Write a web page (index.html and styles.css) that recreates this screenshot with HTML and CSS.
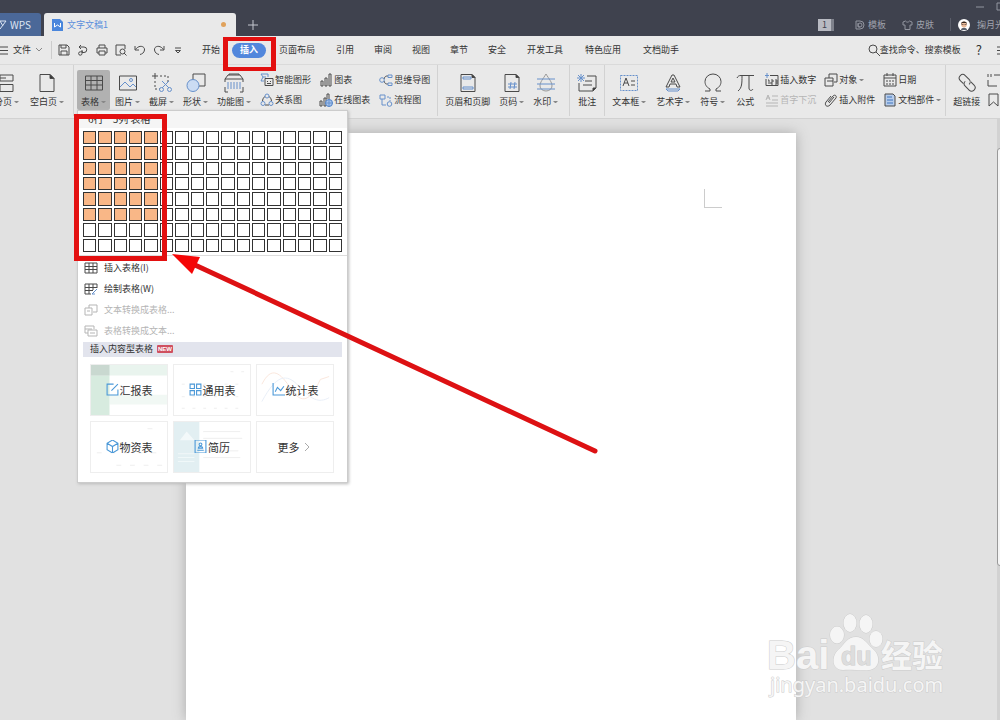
FILE: index.html
```html
<!DOCTYPE html>
<html lang="zh-CN">
<head>
<meta charset="utf-8">
<title>文字文稿1 - WPS</title>
<link rel="stylesheet" href="styles.css">
</head>
<body>
<div class="app">
  <header class="titlebar">
    <button class="wps"><svg width="8" height="12" viewBox="0 0 8 12"><path d="M-3 3 0 10 6 2H0L3 7"/></svg>WPS</button>
    <div class="doctab">
      <svg width="11" height="13" viewBox="0 0 11 13"><path d="M0 1h8l3 3v9H0z" fill="#4a86dc"/><path d="M2.500 5v4l3-2 3 2V5" fill="none" stroke="#fff"/></svg>
      <span>文字文稿1</span><i class="unsaved"></i>
    </div>
    <button class="newtab" aria-label="新建"><svg width="10" height="10" viewBox="0 0 10 10"><path d="M5 0v10M0 5h10"/></svg></button>
    <div class="account">
      <span class="badge">1</span>
      <button class="tool"><svg width="10" height="10" viewBox="0 0 10 10"><path d="M1 1h4a4 4 0 0 1 4 4 4 4 0 0 1-4 4H1z"/><circle cx="5" cy="5" r="2"/><path d="M3 3v4h2"/></svg>模板</button>
      <button class="tool"><svg width="11" height="10" viewBox="0 0 11 10"><path d="M3.500 1 1 2v3h2v4.500h5V5h2V2L7.500 1C6.500 2.500 4.500 2.500 3.500 1z"/></svg>皮肤</button>
      <span class="tsep"></span>
      <svg class="avatar" width="12" height="12" viewBox="0 0 12 12"><circle cx="6" cy="6" r="6" fill="#fff"/><ellipse cx="6" cy="5.500" rx="2.800" ry="3" fill="#e8b896"/><path d="M3 5C2.500 1.500 9.500 1.500 9 5L8 4H4z" fill="#32251f"/><path d="M3.500 5.500h2M6.500 5.500h2" stroke="#544" stroke-width=".7"/><path d="M3 11c0-3 6-3 6 0z" fill="#59606c"/></svg>
      <span class="name">掬月光</span>
    </div>
    <div class="window-controls"><svg width="24" height="10" viewBox="0 0 24 10"><path d="M0 5h8M21 1h8v7h-8z"/></svg></div>
  </header>

  <nav class="menubar">
    <button class="file"><svg width="9" height="9" viewBox="0 0 9 9"><path d="M0 1h8M0 4.500h8M0 8h8"/></svg>文件<svg width="8" height="6" viewBox="0 0 8 6"><path d="M1 1l3 3 3-3" stroke="#888"/></svg></button>
    <div class="quick">
      <button aria-label="保存"><svg viewBox="0 0 12 12"><path d="M1 1h8l2 2v8H1zM3 1v3h5V1M3 11V7h6v4"/></svg></button>
      <button aria-label="输出"><svg viewBox="0 0 12 12"><path d="M4 1 2 3l2 2M2 3h5a2.500 2.500 0 0 1 0 5.500H5M5 6v3.500a1.700 1.700 0 1 1-1.700-1.700H6"/></svg></button>
      <button aria-label="打印"><svg viewBox="0 0 12 12"><path d="M3 4V1h6v3M3 9H1V4h10v5H9M3 7h6v4H3z"/></svg></button>
      <button aria-label="打印预览"><svg viewBox="0 0 12 12"><path d="M10 5V1H1v10h5M11.500 11.500 9 9"/><circle cx="7.500" cy="7.500" r="2.500"/></svg></button>
      <button aria-label="撤销"><svg viewBox="0 0 12 12"><path d="M1 2v4h4M1.500 5.500C5 .5 11 2 10.500 6 10 9 8 10 6 10.500"/></svg></button>
      <button aria-label="恢复"><svg viewBox="0 0 12 12"><path d="M11 2v4H7M10.500 5.500C7 .5 1 2 1.500 6 2 9 4 10 6 10.500"/></svg></button>
      <button aria-label="更多命令"><svg viewBox="0 0 12 12"><path d="M3 4h6M3.500 6.500 6 9l2.500-2.500z"/></svg></button>
    </div>
    <div class="tabs">
      <button>开始</button><button class="active">插入</button><button class="wide">页面布局</button><button>引用</button><button>审阅</button><button>视图</button><button>章节</button><button>安全</button><button class="wide">开发工具</button><button class="wide">特色应用</button><button class="wide">文档助手</button>
    </div>
    <div class="find">
      <button><svg width="12" height="12" viewBox="0 0 12 12"><circle cx="5" cy="5" r="4"/><path d="M8 8l4 4"/></svg>查找命令、搜索模板</button>
      <button class="help">?</button>
      <svg width="9" height="9" viewBox="0 0 9 9"><path d="M0 1h8M0 4.500h8M0 8h8"/></svg>
    </div>
  </nav>

  <section class="ribbon">
    <div class="group first">
      <button class="big"><svg viewBox="0 0 20 20"><path d="M3 8V2h13v6zM3 5h6M3 18.500v-7h13v7z"/></svg><span class="drop">分页</span></button>
      <button class="big"><svg viewBox="0 0 20 20"><path d="M3 1.500h10l4 4v13H3z"/><path d="M13 1.500v4h4z" fill="#333"/></svg><span class="drop">空白页</span></button>
    </div>
    <div class="group tables">
      <button class="big pressed"><svg viewBox="0 0 20 20"><path d="M1.500 3h17v14h-17zM1.500 7.500h17M1.500 12h17M7 3v14M13 3v14"/></svg><span class="drop">表格</span></button>
      <button class="big"><svg viewBox="0 0 20 20"><path d="M1.500 3h17v14h-17z"/><path class="b" d="M2 14l5-5 5 5 3-3 3 3"/><circle class="b" cx="13" cy="7" r="1.500"/></svg><span class="drop">图片</span></button>
      <button class="big"><svg viewBox="0 0 20 20"><path d="M3 0v6M0 3h6"/><path d="M8 3h8v6M3 8v8h5" stroke-dasharray="2 2"/><path class="b" d="M10 8l7 7M17 8l-7 7"/><circle class="b" cx="9.500" cy="16.500" r="2"/><circle class="b" cx="17.500" cy="16.500" r="2"/></svg><span class="drop">截屏</span></button>
      <button class="big"><svg viewBox="0 0 20 20"><path d="M7 8V1h12v12h-6"/><circle cx="7" cy="12.500" r="6" fill="#cbdcf3" stroke="#6690cb"/></svg><span class="drop">形状</span></button>
      <button class="big"><svg viewBox="0 0 20 20"><path d="M1 9V6l3-4h12l3 4v3M1 6h18M1 14v5h3M19 14v5h-3M5 2V1h10v1"/><path class="b" d="M4 9v7M7 9v7M10 9v7M13 9v7M16 9v7"/></svg><span class="drop">功能图</span></button>
      <div class="stack s1">
        <button><svg viewBox="0 0 14 14"><path class="b" d="M8 4V1H1l2 3-2 4h3M3 4h3"/><path d="M5 5.500h8v7H5zM7 8.500h1M10 8.500h1M7 10.500h4"/></svg>智能图形</button>
        <button><svg viewBox="0 0 14 14"><path d="M2.500 8a5 5 0 0 1 2.500-4.500M11.500 8A5 5 0 0 0 9 3.500M5 12h4"/><circle class="b" cx="7" cy="3" r="2"/><circle class="b" cx="3" cy="10.500" r="2"/><circle class="b" cx="11" cy="10.500" r="2"/></svg>关系图</button>
      </div>
      <div class="stack s2">
        <button><svg viewBox="0 0 14 14"><path d="M2 8h2v5H2zM6 5h2v8H6zM10 1h2v12h-2z"/></svg>图表</button>
        <button><svg viewBox="0 0 14 14"><path d="M1 8h2v5H1zM5 5h2v8H5zM8 6V1h2v5"/><circle cx="10" cy="10" r="3.500" fill="#a9c6ee" stroke="#4c7fc6"/><path class="b" d="M6.500 10h7M10 6.500v7"/></svg>在线图表</button>
      </div>
      <div class="stack">
        <button><svg viewBox="0 0 14 14"><path d="M5 6c1-3 2-3 4-3M5 8c1 3 2 3 4 3"/><circle class="b" cx="3" cy="7" r="2.300"/><path class="b" d="M9 2h4v2.500H9zM9 10h4v2.500H9z"/></svg>思维导图</button>
        <button><svg viewBox="0 0 14 14"><path class="b" d="M1 2h5v4H1zM3 6v6h4"/><path class="b" d="M8 4h3v4" stroke-dasharray="2 1"/><circle class="b" cx="10.500" cy="11" r="2.300"/></svg>流程图</button>
      </div>
    </div>
    <div class="group pages">
      <button class="big"><svg viewBox="0 0 20 20"><path d="M3 1.500h11l3 3v14H3z"/><path d="M14 1.500v3h3z" fill="#333"/><path class="b" d="M5 4h8v2H5zM5 14h10v2H5z"/></svg><span>页眉和页脚</span></button>
      <button class="big"><svg viewBox="0 0 20 20"><path d="M3 1.500h11l3 3v14H3z"/><path d="M14 1.500v3h3z" fill="#333"/><path class="b" d="M9 9l-1 7M13 9l-1 7M6 11h9M6 14h9"/></svg><span class="drop">页码</span></button>
      <button class="big"><svg viewBox="0 0 20 20"><path d="M10 1C7 6 4 9 4 13a6 5 0 0 0 12 0C16 9 13 6 10 1z" stroke="#999"/><path class="b" d="M1 6h18M1 11h18M1 16h18"/></svg><span class="drop">水印</span></button>
    </div>
    <div class="group notes">
      <button class="big"><svg viewBox="0 0 20 20"><path d="M10 3h9v12l-3 3H2V10M8 8h7M6 12h9"/><path d="M19 15h-3v3z" fill="#333"/><path class="b" d="M4 1v8M0 5h8M1 2l6 6M7 2 1 8"/></svg><span>批注</span></button>
    </div>
    <div class="group texts">
      <button class="big"><svg viewBox="0 0 20 20"><path class="b" d="M1.500 2.500h17v15h-17z" stroke-dasharray="2 1"/><path d="M4 13l3-8 3 8M5 10h4M12 8h4M12 12h4"/></svg><span class="drop">文本框</span></button>
      <button class="big"><svg viewBox="0 0 20 20"><path d="M9 2h2l6 12h-3l-1-3H7l-1 3H3zM8 9h4l-2-4z"/><path class="b" d="M3 16h14l-2 2H5z"/></svg><span class="drop">艺术字</span></button>
      <button class="big"><svg viewBox="0 0 20 20"><path d="M2 18h5v-2C3 14 2 11 2 8.500a8 7.500 0 0 1 16 0c0 2.500-1 5.500-5 7.500v2h5"/></svg><span class="drop">符号</span></button>
      <button class="big"><svg viewBox="0 0 20 20"><path d="M2 5c1-2 2-2.500 4-2.500h13M7 3c0 7 0 12-4 15M14 3v12c0 3 3 3 4 1"/></svg><span>公式</span></button>
      <div class="stack s3">
        <button><svg viewBox="0 0 14 14"><path d="M5 2.500h8v10H1V6M3 7h1v4M6 7h2v2H6v2h2M10 7h2v4h-2M10 9h2"/><path class="b" d="M2 0v5M0 2.500h4"/></svg>插入数字</button>
        <button disabled><svg viewBox="0 0 14 14"><path d="M1 7l2-5 2 5M2 5h3M7 3h6M7 7h6M1 10h12M1 13h12"/></svg>首字下沉</button>
      </div>
      <div class="stack s4">
        <button><svg viewBox="0 0 14 14"><path d="M5 5V1h8v8h-3M1 5h8v8H1zM3 8h6"/></svg><span class="drop">对象</span></button>
        <button><svg viewBox="0 0 14 14"><path d="M4 9l5-6c2-2 4 0 3 2l-6 7c-3 3-6 0-4-3l5-6M5 10l5-6"/></svg>插入附件</button>
      </div>
      <div class="stack">
        <button><svg viewBox="0 0 14 14"><path d="M1 2h12v11H1zM1 5h12M4 0v3M10 0v3M3 8h2M6 8h2M9 8h2M3 11h2M6 11h2M9 11h2"/></svg>日期</button>
        <button><svg viewBox="0 0 14 14"><path d="M2 1h8l2 2v10H2z" fill="#b7cdec"/><path d="M4 4h5M4 7h6M4 10h6" stroke="#3f74bd"/></svg><span class="drop">文档部件</span></button>
      </div>
    </div>
    <div class="group links">
      <button class="big"><svg viewBox="0 0 20 20"><g transform="rotate(45 10 10)"><path d="M8 13H3.500a3.500 3.500 0 0 1 0-7H9a3.500 3.500 0 0 1 3.500 3.500"/><path d="M12 6.500h4.500a3.500 3.500 0 0 1 0 7H11A3.500 3.500 0 0 1 7.500 10"/></g></svg><span>超链接</span></button>
      <div class="stack s5">
        <button><svg viewBox="0 0 14 14"><path d="M1 1v3M4 1v3M7 2h6M1 7v6h9"/></svg>交叉引用</button>
        <button><svg viewBox="0 0 14 14"><path d="M2 1h9v12L6.500 9 2 13z"/></svg>书签</button>
      </div>
    </div>
  </section>

  <main class="workspace">
    <div class="page"><i class="corner"></i></div>
    <div class="scroll"><i></i></div>
  </main>

  <div class="dropdown">
    <div class="size">6行 * 5列 表格</div>
    <div class="cells" id="cells"></div>
    <div class="items">
      <button><svg viewBox="0 0 14 12"><path d="M1 1h12v10H1zM1 4.500h12M1 7.500h12M5 1v10M9 1v10"/></svg>插入表格(I)</button>
      <button><svg viewBox="0 0 14 12"><path d="M13 5V1H1v10h6M1 4.500h12M1 7.500h8M5 1v10M9 1v6"/><path class="b" d="M8 11l5-5M8 11h3"/></svg>绘制表格(W)</button>
      <button disabled><svg viewBox="0 0 14 12"><path d="M5 4V1h8v7H9M1 4h7v7H1zM3 7h3"/></svg>文本转换成表格...</button>
      <button disabled><svg viewBox="0 0 14 12"><path d="M4 8H1V1h9v3M1 4h7M4 5h9v6H4zM6 8h5"/></svg>表格转换成文本...</button>
    </div>
    <div class="section">插入内容型表格<b>NEW</b></div>
    <div class="cards">
      <button><svg class="art" viewBox="0 0 78 52" preserveAspectRatio="none"><path fill="#e9f4ee" d="M0 0h78v11H0z"/><path fill="#f1f8f4" d="M19 31h59v10H19z"/><path fill="#d7ebdf" d="M0 11h19v41H0z"/><path fill="#c9d8d0" d="M0 0h19v11H0z"/></svg><svg class="ic" viewBox="0 0 12 12"><path d="M7 1H1v10h10V6M5 7l6-6"/></svg><span>汇报表</span></button>
      <button><svg class="art" viewBox="0 0 78 52" preserveAspectRatio="none"><path stroke="#eee" stroke-dasharray="3 8" d="M58 7h14M8 20h64M8 33h64M8 45h64"/></svg><svg class="ic" viewBox="0 0 12 12"><path d="M1 1h4v4H1zM7 1h4v4H7zM1 7h4v4H1zM7 7h4v4H7z"/></svg><span>通用表</span></button>
      <button><svg class="art" viewBox="0 0 78 52" preserveAspectRatio="none"><path class="warm" d="M5 20C15 0 24 8 35 25s20 12 30-10l9-3"/><path class="cool" d="M5 38C20 10 30 8 43 22s20 18 31 12"/></svg><svg class="ic" viewBox="0 0 12 12"><path d="M1 0v11h11M3 8l2-4 3 3 3-4"/></svg><span>统计表</span></button>
      <button><svg class="art" viewBox="0 0 78 52" preserveAspectRatio="none"><path stroke="#eee" stroke-dasharray="5 9" d="M58 7h14M6 32h66M26 45h48"/></svg><svg class="ic" viewBox="0 0 12 12"><path d="M6 0l5 3v6l-5 3-5-3V3zM1 3l5 3 5-3M6 6v6"/></svg><span>物资表</span></button>
      <button><svg class="art" viewBox="0 0 78 52" preserveAspectRatio="none"><path fill="#e2eff2" d="M0 0h26v52H0z"/><path fill="#fff" d="M6 19l7-9 8 9z" opacity=".6"/><path stroke="#eee" d="M30 10h38M30 17h40M30 30h36M30 37h38"/><path stroke="#f2f8f9" d="M4 33h17M4 37h17M4 41h17"/></svg><svg class="ic" viewBox="0 0 12 12"><path d="M1 0h10v12H1zM3 9.500h6M4 7.500c0-2 4-2 4 0z"/><circle cx="6" cy="4" r="1.300"/></svg><span>简历</span></button>
      <button><span>更多</span><svg class="more" viewBox="0 0 8 10"><path d="M2 1l4 4-4 4"/></svg></button>
    </div>
  </div>

  <div class="mark mark-tab"></div>
  <div class="mark mark-cells"></div>
  <svg class="arrow" width="430" height="206" viewBox="0 0 430 206"><path d="M25 13 425 199" stroke="#dd1113" stroke-width="5" stroke-linecap="round"/><path d="M2 2l28 3-8 17z" fill="#f50606"/></svg>

  <svg class="watermark" width="190" height="90" viewBox="0 0 190 90">
    <text class="logo" x="5" y="59">Bai</text>
    <ellipse cx="75" cy="25" rx="7" ry="8.500"/><ellipse cx="88" cy="13" rx="6.500" ry="9"/><ellipse cx="104" cy="14" rx="6.500" ry="9"/><ellipse cx="114" cy="29" rx="6.500" ry="8"/>
    <path d="M94 27c8 0 11 7 17 12 8 7 7 20-4 21-7 1-18-1-26 0-11 0-12-13-5-20 7-6 9-13 18-13z"/>
    <text class="du" x="79" y="55">du</text>
    <text class="cn" x="119" y="57">经验</text>
    <text class="url" x="8" y="82">jingyan.baidu.com</text>
  </svg>
</div>
<script src="cells.js"></script>
</body>
</html>
```

FILE: styles.css
```css
* { box-sizing: border-box; }
body { margin: 0; font: 9px/12px "Noto Sans CJK SC", sans-serif; color: #333; }
button { font: inherit; color: inherit; background: none; border: 0; padding: 0; margin: 0; display: flex; align-items: center; white-space: nowrap; flex: none; }
svg { fill: none; stroke: #4a4a4a; stroke-width: 1; flex: none; }
.b { stroke: #6690cb; }
.app { position: relative; height: 100vh; overflow: hidden; display: flex; flex-direction: column; background: #e1e1e1; }

.titlebar { position: relative; flex: none; height: 36px; background: #3f424e; display: flex; align-items: flex-end; overflow: hidden; color: #a0a3ad; }
.wps { height: 23px; width: 41px; gap: 2px; background: #4b6898; color: #dde5f3; border-radius: 0 3px 0 0; font-size: 10px; }
.wps svg { stroke: #dde5f3; }
.doctab { height: 23px; width: 192px; margin-left: 3px; padding: 0 10px 0 8px; display: flex; align-items: center; gap: 4px; background: #e9e9e9; border-radius: 3px 3px 0 0; color: #5c8fdc; }
.doctab svg { stroke: none; }
.unsaved { width: 5px; height: 5px; border-radius: 50%; background: #e0a25c; margin-left: auto; }
.newtab { height: 23px; margin-left: 12px; }
.newtab svg { stroke: #c5c7cf; }
.account { margin-left: auto; height: 23px; display: flex; align-items: center; margin-right: -4px; flex: none; }
.badge { width: 16px; height: 12px; background: #b8bac2; color: #3f424e; text-align: center; border-right: 3px solid #7e818b; margin-right: 21px; }
.tool { gap: 3px; margin-right: 16px; }
.tool svg { stroke: #92959f; }
.tsep { width: 1px; height: 13px; background: #5a5d69; margin-right: 7px; }
.avatar { stroke: none; margin-right: 7px; }
.window-controls { position: absolute; right: 0; top: 2px; height: 10px; }
.window-controls svg { stroke: #92959f; display: block; }

.menubar { flex: none; height: 29px; background: #e9e9e9; border-bottom: 1px solid #dadada; display: flex; align-items: center; overflow: hidden; }
.file { gap: 4px; width: 52px; height: 18px; border-right: 1px solid #ccc; }
.quick { display: flex; gap: 7px; margin-left: 6px; }
.quick svg { width: 12px; height: 12px; }
.tabs { display: flex; align-items: center; gap: 20px; margin-left: 18px; }
.tabs .wide { width: 38px; justify-content: center; }
.tabs .active { margin: 0 -8px; height: 15px; padding: 0 8px; border-radius: 8px; background: #5287dc; color: #fff; font-weight: bold; }
.find { margin-left: auto; display: flex; align-items: center; gap: 15px; margin-right: -6px; }
.help { font-size: 13px; }

.ribbon { flex: none; height: 54px; background: #e9e9e9; border-bottom: 1px solid #d2d2d2; display: flex; overflow: hidden; }
.group { display: flex; flex: none; padding: 4px 3px 0; border-right: 1px solid #d2d2d2; gap: 1px; margin: 0 0 2px; }
.first { margin-left: -13px; gap: 3px; padding-right: 5px; }
.tables { padding-right: 7px; }
.pages { padding-right: 7px; }
.texts { gap: 2px; padding-right: 4px; }
.links { border: 0; }
.big { flex-direction: column; height: 40px; padding: 3px 4px 0; gap: 3px; border-radius: 2px; margin-top: 1px; }
.big svg { width: 20px; height: 20px; }
.pressed { background: #b1b1b1; }
.drop { display: flex; align-items: center; gap: 2px; }
.drop::after { content: ""; border: 2px solid transparent; border-top-color: #888; border-bottom: 0; width: 1px; }
.stack { display: flex; flex-direction: column; padding-top: 1px; margin-left: 4px; }
.stack button { height: 20px; gap: 1px; }
.stack svg { width: 14px; height: 14px; }
.s1 { margin-right: 3px; }
.s2 { margin-right: 4px; }
.s3, .s4 { margin-right: 2px; }
.s5 { margin-left: 2px; }
button:disabled { color: #b5b5b5; }
button:disabled svg { stroke: #b5b5b5; }

.workspace { flex: 1; display: flex; }
.page { flex: 1; margin: 14px 201px 0 186px; background: #fff; box-shadow: 0 0 12px #aaa; }
.corner { display: block; width: 18px; height: 19px; margin: 56px 74px 0 auto; border: solid #ccc; border-width: 0 0 1px 1px; }
.scroll { width: 3px; background: #d2d2d2; overflow: hidden; padding-top: 29px; }
.scroll i { display: block; width: 8px; height: 73%; background: #f5f5f5; border: 1px solid #999; border-radius: 3px; }

.dropdown { position: absolute; left: 77px; top: 110px; width: 271px; padding-bottom: 9px; background: #fff; border: 1px solid #ccc; box-shadow: 1px 1px 3px #bbb; }
.size { height: 17px; padding: 2px 10px 0; background: #f5f5f5; font-size: 10px; }
.cells { display: grid; grid-template-columns: repeat(17, 1fr); gap: 2px; padding: 3px 5px; border-bottom: 1px solid #ddd; }
.cells button { display: block; width: auto; aspect-ratio: 1; border: 1px solid #333; background: #fff; }
.cells .on { background: #f9b787; }
.items { padding-top: 2px; }
.items button { height: 21px; width: 100%; padding-left: 6px; gap: 6px; }
.items svg { width: 14px; height: 12px; }
.section { margin: 0 5px; height: 15px; padding: 0 7px; background: #e2e4ed; display: flex; align-items: center; gap: 4px; }
.section b { background: #cf5060; color: #fff; font: bold 6px/8px "Liberation Sans", sans-serif; padding: 0 1px; border-radius: 1px; }
.cards { display: grid; grid-template-columns: repeat(3, 1fr); gap: 5px; padding: 7px 13px 0 12px; font-size: 11px; }
.cards button { position: relative; height: 52px; border: 1px solid #eee; justify-content: center; gap: 1px; }
.cards span { position: relative; }
.art { position: absolute; inset: 0; width: 100%; height: 100%; stroke: none; }
.warm { stroke: #fae6dc; }
.cool { stroke: #e8eef8; }
.ic { position: relative; width: 13px; height: 13px; stroke: #4a98d8; }
.more { width: 12px; height: 10px; stroke: #aaa; }

.mark { position: absolute; border: 5px solid #e31010; }
.mark-tab { left: 223px; top: 37px; width: 53px; height: 34px; border-width: 4px 5px; }
.mark-cells { left: 74px; top: 114px; width: 93px; height: 147px; }
.arrow { position: absolute; left: 170px; top: 252px; stroke: none; }

.watermark { position: absolute; right: 48px; bottom: 20px; fill: #f5f5f5; stroke: #ccc; stroke-width: 1; paint-order: stroke; font-family: "Liberation Sans", "Noto Sans CJK SC", sans-serif; }
.logo { font-size: 40px; font-weight: bold; }
.du { font-size: 25px; font-weight: bold; fill: #ddd; }
.cn { font-size: 31px; font-weight: bold; }
.url { font: 20px "Noto Sans", sans-serif; }
```

FILE: cells.js
```js
const grid = document.getElementById("cells");
for (let row = 1; row <= 8; row++) {
  for (let col = 1; col <= 17; col++) {
    const cell = document.createElement("button");
    cell.setAttribute("aria-label", row + "行" + col + "列");
    if (row <= 6 && col <= 5) cell.className = "on";
    grid.append(cell);
  }
}
```
